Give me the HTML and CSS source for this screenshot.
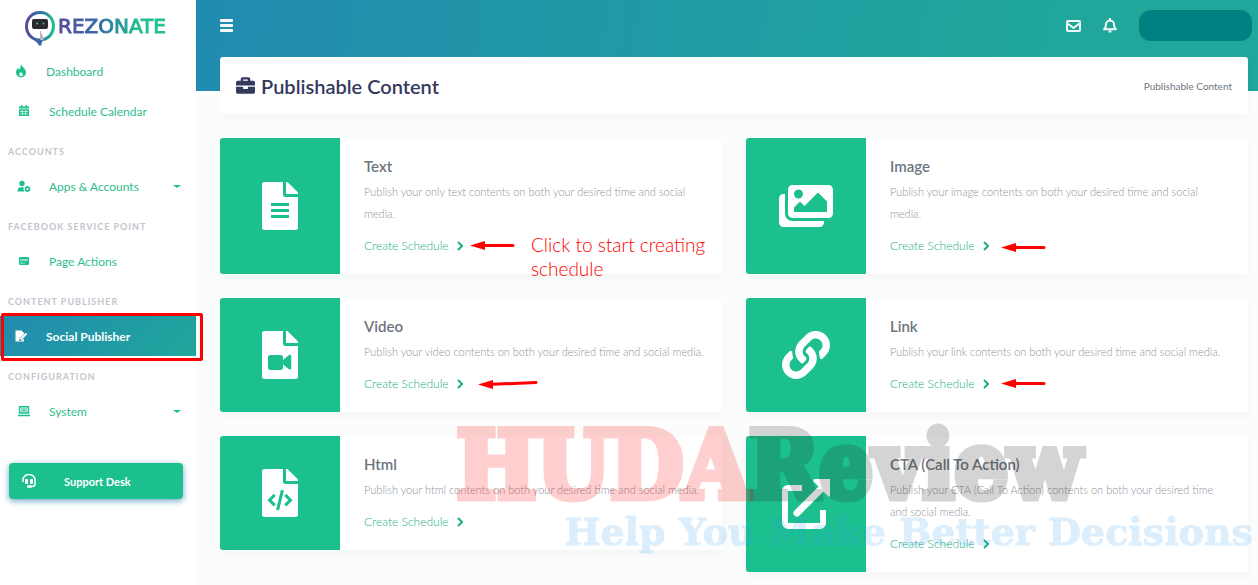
FILE: index.html
```html
<!DOCTYPE html>
<html lang="en">
<head>
<meta charset="utf-8">
<title>Publishable Content</title>
<link rel="stylesheet" href="styles.css">
</head>
<body>
  <!-- shared icon shapes -->
  <svg class="defs" width="0" height="0">
    <symbol id="file" viewBox="0 0 384 512">
      <path d="M224 136V0H24C10.700 0 0 10.700 0 24v464c0 13.300 10.700 24 24 24h336c13.300 0 24-10.700 24-24V160H248c-13.200 0-24-10.800-24-24zM384 122v6H256V0h6c6.400 0 12.500 2.500 17 7l98 98c4.500 4.500 7 10.600 7 17z"/>
    </symbol>
    <symbol id="chevron" viewBox="0 0 6 10"><path d="M1 1l4 4-4 4" fill="none" stroke="currentColor" stroke-width="2"/></symbol>
    <symbol id="arrow" viewBox="0 0 45 11"><path d="M0 5.500L15 1v9z"/><path d="M14 5.500h29" stroke="currentColor" stroke-width="3" stroke-linecap="round"/></symbol>
    <symbol id="arrow-up" viewBox="0 0 60 11"><path d="M0 6.500L15 2v9z"/><path d="M14 6.300l44-1.800" stroke="currentColor" stroke-width="3" stroke-linecap="round"/></symbol>
  </svg>

  <aside class="sidebar">
    <a class="logo" href="#">
      <svg width="32" height="36" viewBox="0 0 32 36">
        <defs>
          <linearGradient id="ring"><stop offset="0" stop-color="#5b4a9b"/><stop offset=".5" stop-color="#2f6da6"/><stop offset="1" stop-color="#1fbf92"/></linearGradient>
        </defs>
        <path d="M16 35.500v-5C8 29.500 2.500 24 2.500 16.500 2.500 8.500 8 2.500 16 2.500S29.500 8.500 29.500 16c0 7-4.500 12.500-10.500 13.500" fill="none" stroke="url(#ring)" stroke-width="3"/>
        <path d="M9 29l7 6.500 3-5-3-2z" fill="#3f62a3"/>
        <rect x="8" y="9" width="16" height="10" rx="2" fill="#2b2b2f"/>
        <circle cx="13" cy="13.500" r="1" fill="#25c795"/><circle cx="19.500" cy="13.500" r="1" fill="#25c795"/>
        <path d="M16 20l4 9-4 1z" fill="#b9b4b8"/>
      </svg>
      <span>REZONATE</span>
    </a>
    <nav>
      <a class="item dashboard" href="#">
        <svg class="icon" viewBox="0 0 12 14"><path d="M6 0c.5 2.500 5 4.500 5 8.500a5 5 0 0 1-10 0c0-2 1-3.500 1.700-4.500.6.300.8 1 1.100 1.700C5.200 4.500 6 2.500 6 0z"/><path d="M6 7.500c0 1.300 1.800 1.500 1.800 3a1.800 1.800 0 0 1-3.600 0c0-1.200 1.300-1.500 1.800-3z" fill="#fff"/></svg>
        Dashboard
      </a>
      <a class="item" href="#">
        <svg class="icon" viewBox="0 0 14 14"><path d="M2 2.500h2V1h1.500v1.500h3V1H10v1.500h2v2H2zM2 5.200h10V12H2z"/><path d="M3 7.500h8M3 9.800h8M5.500 6.200v5M8.500 6.200v5" stroke="#fff" stroke-width=".6"/></svg>
        Schedule Calendar
      </a>
      <h6>ACCOUNTS</h6>
      <a class="item" href="#">
        <svg class="icon" viewBox="0 0 14 14"><circle cx="5" cy="4.500" r="2.700"/><path d="M.5 12.500c0-3 1.500-4.300 3-4.300h3.300c-.6 1.500-.3 3 .8 4.300z"/><circle cx="10.500" cy="10" r="2" fill="none" stroke="currentColor" stroke-width="1.600"/><path d="M10.500 7v6M8 8.500l5 3M13 8.500l-5 3" stroke="currentColor" stroke-width="1"/><circle cx="10.500" cy="10" r="1" fill="#fff"/></svg>
        Apps &amp; Accounts
        <i class="caret"></i>
      </a>
      <h6>FACEBOOK SERVICE POINT</h6>
      <a class="item" href="#">
        <svg class="icon" viewBox="0 0 14 14"><rect x="2" y="3" width="10" height="8" rx="1"/><path d="M3 6h8M3.500 9h2M6.500 9h1" stroke="#fff" stroke-width="1"/></svg>
        Page Actions
      </a>
      <h6>CONTENT PUBLISHER</h6>
      <a class="item active" href="#">
        <svg class="icon" viewBox="0 0 14 14"><path d="M1.500 1.500h6L10 4v1L5.500 9.500 5 12l2.500-.5L10 9.500v3H1.500z"/><path d="M6.500 10.500l6-6" stroke="currentColor" stroke-width="2"/></svg>
        Social Publisher
        <span class="highlight"></span>
      </a>
      <h6>CONFIGURATION</h6>
      <a class="item" href="#">
        <svg class="icon" viewBox="0 0 14 14"><path d="M2.500 9V2.700h9V9zM.8 11.500h12.400" fill="none" stroke="currentColor" stroke-width="1.400"/><path d="M4.500 4.700h2v2.600h-2zM7.500 4.700h2v2.600h-2z" fill="none" stroke="currentColor" stroke-width=".8"/></svg>
        System
        <i class="caret"></i>
      </a>
    </nav>
    <a class="support" href="#">
      <svg width="14" height="14" viewBox="0 0 14 14"><path d="M1 8V6a6 5.500 0 0 1 12 0v4c0 1.500-1 2.500-3 2.500H7.500" fill="none" stroke="#fff" stroke-width="1.500"/><rect x="3" y="5" width="3" height="5" rx="1" fill="#fff"/><rect x="8" y="5" width="3" height="5" rx="1" fill="#fff"/><rect x="5" y="11.300" width="5" height="2.400" rx="1" fill="#fff"/></svg>
      <span>Support Desk</span>
    </a>
  </aside>

  <main>
    <header class="topbar">
      <button class="menu" aria-label="Menu"><i></i><i></i><i></i></button>
      <div class="tools">
        <button aria-label="Messages"><svg class="line" width="15" height="12" viewBox="0 0 15 12"><rect x="1" y="1" width="13" height="10" rx="1"/><path d="M1 3l6.500 5L14 3"/></svg></button>
        <button aria-label="Notifications"><svg class="line" width="14" height="15" viewBox="0 0 14 15"><path d="M7 0v2M1 11.300h12c-1.500-1-2-2.500-2-4.800a4 4 0 0 0-8 0c0 2.300-.5 3.800-2 4.800z"/><path d="M5.500 13.500h3"/></svg></button>
        <button class="user" aria-label="Account"></button>
      </div>
    </header>

    <div class="content">
      <section class="title-bar">
        <h1>
          <svg width="19" height="19" viewBox="0 0 512 512"><path d="M320 336c0 8.840-7.160 16-16 16h-96c-8.840 0-16-7.160-16-16v-48H0v144c0 25.600 22.400 48 48 48h416c25.600 0 48-22.400 48-48V288H320v48zm144-208h-80V80c0-25.600-22.400-48-48-48H176c-25.600 0-48 22.400-48 48v48H48c-25.600 0-48 22.400-48 48v80h512v-80c0-25.600-22.400-48-48-48zm-144 0H192V96h128v32z"/></svg>
          Publishable Content
        </h1>
        <span>Publishable Content</span>
      </section>

      <div class="cards">
        <article class="card">
          <div class="thumb">
            <svg width="36" height="48" viewBox="0 0 384 512"><use href="#file"/><path d="M96 241h192M96 305h192M96 369h192" stroke="#1bc08e" stroke-width="32"/></svg>
          </div>
          <div class="body">
            <h4>Text</h4>
            <p>Publish your only text contents on both your desired time and social<br> media.</p>
            <a href="#">Create Schedule <svg width="6" height="10"><use href="#chevron"/></svg></a>
            <svg class="arrow" width="45" height="11"><use href="#arrow"/></svg>
            <div class="note">Click to start creating schedule</div>
          </div>
        </article>

        <article class="card">
          <div class="thumb">
            <svg width="54" height="48" viewBox="0 0 576 512"><path d="M480 416v16c0 26.510-21.490 48-48 48H48c-26.510 0-48-21.490-48-48V176c0-26.510 21.490-48 48-48h16v208c0 44.112 35.888 80 80 80h336zm96-80V80c0-26.510-21.490-48-48-48H144c-26.510 0-48 21.490-48 48v256c0 26.510 21.490 48 48 48h384c26.510 0 48-21.490 48-48zM256 128c0 26.510-21.490 48-48 48s-48-21.490-48-48 21.490-48 48-48 48 21.490 48 48zm-96 144l55.515-55.515c4.686-4.686 12.284-4.686 16.971 0L272 256l135.515-135.515c4.686-4.686 12.284-4.686 16.971 0L512 208v112H160v-48z"/></svg>
          </div>
          <div class="body">
            <h4>Image</h4>
            <p>Publish your image contents on both your desired time and social<br> media.</p>
            <a href="#">Create Schedule <svg width="6" height="10"><use href="#chevron"/></svg></a>
            <svg class="arrow low" width="45" height="11"><use href="#arrow"/></svg>
          </div>
        </article>

        <article class="card">
          <div class="thumb">
            <svg width="36" height="48" viewBox="0 0 384 512"><use href="#file"/><path d="M88 256h112c14 0 24 10 24 24v28l64-52c10-8 24 0 24 12v128c0 12-14 20-24 12l-64-52v36c0 14-10 24-24 24H88c-14 0-24-10-24-24V280c0-14 10-24 24-24z" fill="#1bc08e"/></svg>
          </div>
          <div class="body">
            <h4>Video</h4>
            <p>Publish your video contents on both your desired time and social media.</p>
            <a href="#">Create Schedule <svg width="6" height="10"><use href="#chevron"/></svg></a>
            <svg class="arrow mid" width="60" height="11"><use href="#arrow-up"/></svg>
          </div>
        </article>

        <article class="card">
          <div class="thumb">
            <svg width="48" height="48" viewBox="0 0 512 512"><path d="M326.612 185.391c59.747 59.809 58.927 155.698.360 214.590-.110.120-.240.250-.360.370l-67.200 67.200c-59.270 59.270-155.699 59.262-214.960 0-59.270-59.260-59.270-155.700 0-214.960l37.106-37.106c9.840-9.840 26.786-3.300 27.294 10.606.648 17.722 3.826 35.527 9.690 52.721 1.986 5.822.567 12.262-3.783 16.612l-13.087 13.087c-28.026 28.026-28.905 73.660-1.155 101.960 28.024 28.579 74.086 28.749 102.325.510l67.200-67.190c28.191-28.191 28.073-73.757 0-101.830-3.701-3.694-7.429-6.564-10.341-8.569a16.037 16.037 0 0 1-6.947-12.606c-.396-10.567 3.348-21.456 11.698-29.806l21.054-21.055c5.521-5.521 14.182-6.199 20.584-1.731a152.482 152.482 0 0 1 20.522 17.197zM467.547 44.449c-59.261-59.262-155.690-59.270-214.960 0l-67.200 67.200c-.120.120-.250.250-.360.370-58.566 58.892-59.387 154.781.360 214.590a152.454 152.454 0 0 0 20.521 17.196c6.402 4.468 15.064 3.789 20.584-1.731l21.054-21.055c8.350-8.350 12.094-19.239 11.698-29.806a16.037 16.037 0 0 0-6.947-12.606c-2.912-2.005-6.640-4.875-10.341-8.569-28.073-28.073-28.191-73.639 0-101.830l67.200-67.190c28.239-28.239 74.300-28.069 102.325.510 27.750 28.300 26.872 73.934-1.155 101.960l-13.087 13.087c-4.350 4.350-5.769 10.790-3.783 16.612 5.864 17.194 9.042 34.999 9.690 52.721.509 13.906 17.454 20.446 27.294 10.606l37.106-37.106c59.271-59.259 59.271-155.699.001-214.959z"/></svg>
          </div>
          <div class="body">
            <h4>Link</h4>
            <p>Publish your link contents on both your desired time and social media.</p>
            <a href="#">Create Schedule <svg width="6" height="10"><use href="#chevron"/></svg></a>
            <svg class="arrow far" width="45" height="11"><use href="#arrow"/></svg>
          </div>
        </article>

        <article class="card">
          <div class="thumb">
            <svg width="36" height="48" viewBox="0 0 384 512"><use href="#file"/><path d="M136 276l-56 56 56 56M248 276l56 56-56 56M218 226l-52 212" fill="none" stroke="#1bc08e" stroke-width="32"/></svg>
          </div>
          <div class="body">
            <h4>Html</h4>
            <p>Publish your html contents on both your desired time and social media.</p>
            <a href="#">Create Schedule <svg width="6" height="10"><use href="#chevron"/></svg></a>
          </div>
        </article>

        <article class="card">
          <div class="thumb">
            <svg width="50" height="50" viewBox="0 0 50 50"><path d="M21 9H7a3 3 0 0 0-3 3v32a3 3 0 0 0 3 3h32a3 3 0 0 0 3-3V31" fill="none" stroke="#fff" stroke-width="6"/><path d="M16 34L40 10" stroke="#fff" stroke-width="7" stroke-linecap="round"/><path d="M34 0h15v16a1 1 0 0 1-2 1L33 3c-1-1-1-3 1-3z"/></svg>
          </div>
          <div class="body">
            <h4>CTA (Call To Action)</h4>
            <p>Publish your CTA (Call To Action) contents on both your desired time<br> and social media.</p>
            <a href="#">Create Schedule <svg width="6" height="10"><use href="#chevron"/></svg></a>
          </div>
        </article>
      </div>
    </div>
  </main>

  <div class="watermark">
    <div class="brand"><span class="huda">HUDA</span><span class="review">Review</span></div>
    <div class="tagline">Help You Make Better Decisions</div>
  </div>
</body>
</html>
```
FILE: styles.css
```css
* {
  margin: 0;
  padding: 0;
  box-sizing: border-box;
}

body {
  position: relative;
  display: flex;
  min-height: 100vh;
  overflow: hidden;
  background: #fafdfb;
  font-family: "Lato", "Open Sans", sans-serif;
  font-size: 12px;
  color: #6c757d;
}

a {
  color: #2fbd8b;
  text-decoration: none;
}

button {
  border: 0;
  background: none;
  cursor: pointer;
}

svg {
  fill: currentColor;
}

svg.line {
  fill: none;
  stroke: #f2f8fa;
  stroke-width: 2px;
  stroke-linejoin: round;
}

.defs {
  position: absolute;
}

/* sidebar */
.sidebar {
  width: 196px;
  flex-shrink: 0;
  background: #fff;
}

.logo {
  display: flex;
  align-items: center;
  height: 51px;
  padding: 4px 0 0 24px;
}

.logo span {
  margin: -4px 0 0 2px;
  font-family: "DejaVu Sans", sans-serif;
  font-size: 20px;
  background: linear-gradient(90deg, #5b4a9b, #2f6da6 40%, #1fc08f 75%);
  -webkit-background-clip: text;
  background-clip: text;
  color: transparent;
  -webkit-text-stroke: 1px transparent;
}

.item {
  position: relative;
  display: flex;
  align-items: center;
  height: 40px;
  padding: 0 15px 0 17px;
}

.icon {
  width: 14px;
  height: 14px;
  margin-right: 18px;
  color: #1bc08e;
}

.item.dashboard {
  padding-left: 14px;
}

.item.active {
  padding-left: 14px;
  background: linear-gradient(135deg, #228bb0, #1fa79b);
  color: #fff;
  font-weight: bold;
}

.active .icon {
  color: #fff;
}

.caret {
  margin-left: auto;
  border: 4px solid transparent;
  border-top: 3px solid #1bc08e;
  border-bottom: 0;
}

.highlight {
  position: absolute;
  inset: -3px -7px -5px 1px;
  border: 3px solid #f00;
  border-radius: 2px;
}

.sidebar h6 {
  height: 35px;
  padding: 6px 8px 0;
  font-size: 9px;
  line-height: 30px;
  letter-spacing: 1px;
  color: #c3c5cd;
}

.support {
  display: flex;
  align-items: center;
  height: 36px;
  margin: 32px 13px 0 9px;
  padding: 0 13px;
  border-radius: 4px;
  background: #1bc08e;
  box-shadow: 0 2px 6px #6ea6c8;
  color: #fff;
  font-size: 11px;
  font-weight: bold;
}

.support span {
  margin-left: 28px;
}

/* main area */
main {
  flex: 1;
  min-width: 0;
  background: linear-gradient(100deg, #228bb0, #1fa79b 80%) no-repeat;
  background-size: 100% 91px;
}

.topbar {
  display: flex;
  justify-content: space-between;
  align-items: center;
  height: 57px;
  padding: 0 6px 6px 24px;
}

.menu {
  display: grid;
  gap: 2px;
}

.menu i {
  width: 13px;
  height: 3px;
  border-radius: 1px;
  background: #f2f8fa;
}

.tools {
  display: flex;
  align-items: center;
}

.tools button {
  display: flex;
  margin-right: 22px;
}

.tools .user {
  width: 113px;
  height: 31px;
  margin: 0;
  border-radius: 12px;
  background: #008080;
}

.content {
  padding: 0 10px 12px 24px;
}

.title-bar,
.card {
  border-radius: 3px;
  background: #fff;
  box-shadow: 0 4px 8px rgba(0, 0, 0, 0.03);
}

.title-bar {
  display: flex;
  justify-content: space-between;
  align-items: center;
  height: 57px;
  margin-bottom: 24px;
  padding: 0 16px;
  font-size: 10px;
}

h1 {
  display: flex;
  align-items: center;
  gap: 6px;
  font-size: 20px;
  line-height: 24px;
  font-weight: 600;
  color: #34395e;
}

.cards {
  display: grid;
  grid-template-columns: 1fr 1fr;
  gap: 24px;
  align-items: start;
}

.card {
  display: flex;
}

.thumb {
  display: flex;
  align-items: center;
  justify-content: center;
  width: 120px;
  flex-shrink: 0;
  border-radius: 3px 0 0 3px;
  background: #1bc08e;
  color: #fff;
}

.body {
  position: relative;
  flex: 1;
  padding: 16px 8px 17px 24px;
}

h4 {
  font-size: 15px;
  line-height: 24px;
  font-weight: 600;
}

.body p {
  margin: 3px 0 10px;
  font-size: 11px;
  font-weight: 300;
  line-height: 22px;
  color: #8f949d;
}

.body a {
  display: flex;
  align-items: center;
  gap: 8px;
  line-height: 22px;
  font-weight: 300;
  color: #1bb082;
}

/* red marker notes over the cards */
.arrow,
.note {
  position: absolute;
  color: #f00;
}

.arrow {
  left: 130px;
  bottom: 23px;
}

.arrow.mid {
  left: 138px;
}

.arrow.low,
.arrow.far {
  left: 135px;
}

.arrow.low {
  bottom: 21px;
}

.note {
  left: 191px;
  bottom: -7px;
  width: 190px;
  font-size: 19px;
  font-weight: 300;
  line-height: 24px;
}

/* watermark */
.watermark {
  position: absolute;
  right: 5px;
  bottom: 31px;
  font-family: "DejaVu Serif", serif;
  font-weight: bold;
  white-space: nowrap;
  pointer-events: none;
}

.brand {
  margin-right: 172px;
  text-align: right;
  font-family: "DejaVu Serif Condensed", "DejaVu Serif", serif;
  font-size: 94px;
  line-height: 90px;
}

.huda,
.review {
  opacity: 0.19;
  -webkit-text-stroke: 7px;
}

.huda {
  color: #f00;
}

.review {
  color: #222;
}

.tagline {
  text-align: right;
  font-size: 38px;
  line-height: 44px;
  color: #2c9cf0;
  opacity: 0.16;
  -webkit-text-stroke: 1px;
}
```
